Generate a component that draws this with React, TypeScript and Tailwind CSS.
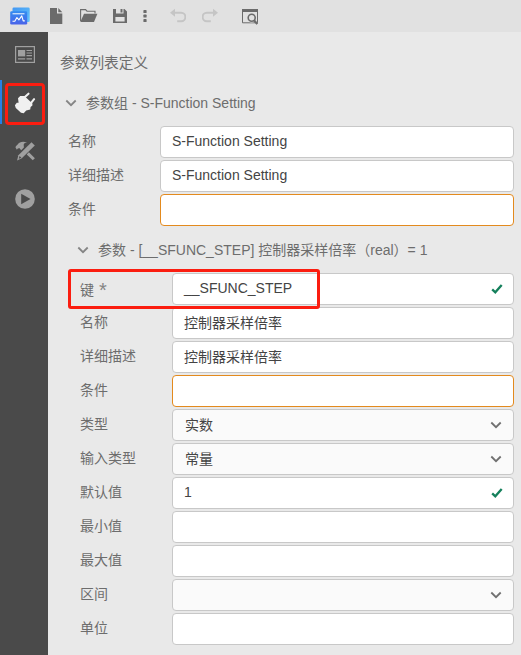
import type { ReactNode } from "react";

function Glyph({ box, w, h, className, children }: { box: string; w: number; h: number; className: string; children: ReactNode }) {
  return (
    <svg viewBox={box} width={w} height={h} className={`shrink-0 ${className}`} fill="none">
      {children}
    </svg>
  );
}

function Toolbar() {
  return (
    <header className="flex h-8 shrink-0 items-center bg-[#e1e1e1] text-[#6b6b6b]">
      <Glyph box="8 4 24 24" w={24} h={24} className="ml-2">
        <defs>
          <linearGradient id="back" x1="0" y1="0" x2="1" y2="1">
            <stop offset="0" stopColor="#4397f3" />
            <stop offset="1" stopColor="#63c5fb" />
          </linearGradient>
          <linearGradient id="front" x1="0" y1="0" x2="0" y2="1">
            <stop offset="0" stopColor="#338cf0" />
            <stop offset="1" stopColor="#4a63e9" />
          </linearGradient>
        </defs>
        <rect x="12.5" y="7.5" width="17.2" height="14.5" rx="1.3" fill="url(#back)" />
        <rect x="10.2" y="11.2" width="17" height="13.3" rx="1.3" fill="url(#front)" />
        <path d="M12.5 13.8h12" stroke="#fff" strokeWidth="1" />
        <path d="M12.5 21.2h2.3l2.1-3.7 2 2.4 2.9-4 1.4 5h1.6" stroke="#fff" strokeWidth="1.1" strokeLinejoin="round" />
      </Glyph>
      <Glyph box="48 8 16 16" w={16} h={16} className="ml-4">
        <path d="M50 8h7v5.5h5.3V24H50zM58.3 8l4 4.2h-4z" fill="currentColor" />
      </Glyph>
      <Glyph box="80 8 18 16" w={18} h={16} className="ml-4">
        <path d="M80.6 21V9.6h5l1.4 1.6h8v2.3" stroke="currentColor" strokeWidth="1.1" />
        <path d="M84 13.8h13.4L94 21.9H80.3z" fill="currentColor" />
      </Glyph>
      <Glyph box="112 8 16 16" w={16} h={16} className="ml-[14px]">
        <path fillRule="evenodd" d="M113 9h11.5l2.5 2.5V23h-14zM116 9v4.6h7.5V9zM115.4 17v4.5h9.2V17z" fill="currentColor" />
        <path d="M120.5 9h2v3.5h-2z" fill="currentColor" />
      </Glyph>
      <Glyph box="143 8 4 16" w={4} h={16} className="ml-[15px]">
        <g fill="currentColor"><rect x="143.4" y="10" width="3.2" height="3.1" rx=".7" /><rect x="143.4" y="14.5" width="3.2" height="3.1" rx=".7" /><rect x="143.4" y="19" width="3.2" height="3.1" rx=".7" /></g>
      </Glyph>
      <Glyph box="170 8 16 16" w={16} h={16} className="ml-[23px] text-[#c5c5c5]">
        <path d="M173 12.8h8.2a4 4 0 0 1 0 8.4h-4" stroke="currentColor" strokeWidth="2" />
        <path d="M170 12.8l5-4v8z" fill="currentColor" />
      </Glyph>
      <Glyph box="202 8 16 16" w={16} h={16} className="ml-4 text-[#c5c5c5]">
        <path d="M215 12.8h-8.2a4 4 0 0 0 0 8.4h4" stroke="currentColor" strokeWidth="2" />
        <path d="M218 12.8l-5-4v8z" fill="currentColor" />
      </Glyph>
      <Glyph box="242 8 16 17" w={16} h={17} className="ml-6">
        <path d="M242.5 9.5h15v13.3h-15z" stroke="currentColor" />
        <path d="M242 9h16v3h-16z" fill="currentColor" />
        <circle cx="251.7" cy="17.8" r="4.8" fill="#e1e1e1" />
        <circle cx="251.7" cy="17.8" r="3.5" stroke="currentColor" strokeWidth="1.6" />
        <path d="M254 20.3l3.3 3.7" stroke="currentColor" strokeWidth="2.2" />
      </Glyph>
    </header>
  );
}

function Sidebar() {
  return (
    <nav className="flex w-12 shrink-0 flex-col bg-[#4a4a4a] text-[#a0a0a0]">
      <div className="flex h-12 items-center justify-center pl-[2px]">
        <Glyph box="0 0 20 17" w={20} h={17} className="-mt-[3px]">
          <rect x=".6" y=".6" width="18.8" height="15.8" stroke="currentColor" strokeWidth="1.2" />
          <path d="M3 4h7.2v6.4H3z" fill="currentColor" />
          <path d="M11.5 4.5H17M11.5 7H17M11.5 9.6H17M3 12.8h7.2M11.5 12.8H17" stroke="currentColor" strokeWidth="1.2" />
        </Glyph>
      </div>
      <div className="relative flex h-12 items-center justify-center text-[#f0f0f0]">
        <div className="absolute left-0 top-0 h-[44px] w-[2px] bg-[#267fe8]" />
        <div className="absolute left-[5px] top-[3px] h-[42px] w-[40px] rounded-[4px] border-[3px] border-[#fb1d10]" />
        <Glyph box="14 92 22 22" w={22} h={22} className="-mt-[2px] ml-[2px]">
          <path d="M18 98.2l2.2-2.2h4.2l8 7.5v2l-1.8 1.4-.4 2.5-4 1.2-2.5 2.6-2.7-.5-5.2-4.6-.9-2.8 1.9-2.5h1.8z" fill="currentColor" />
          <path d="M24.6 97.3l3.9-3.6M30.9 103.2l3.2-4" stroke="currentColor" strokeWidth="2.1" strokeLinecap="round" />
        </Glyph>
      </div>
      <div className="flex h-12 items-center justify-center pl-[2px]">
        <Glyph box="15 141 20 21" w={20} h={21} className="-mt-[2px]">
          <path d="M15.5 147.4c.4-1.8 1.4-1.9 2.2-2.9 1.7-3 5.7-3.2 9.4-2-2.5.2-3.3 1-3.4 2.3l.2 2.8-2.7 2.6-1.9-2.3-1.8.8-.6 1.1z" fill="currentColor" />
          <path d="M27.8 153.4l6 5.9" stroke="currentColor" strokeWidth="3" />
          <path d="M31.5 142.3l3.3 3.2-13 12.8-4.7 2.2 1.3-5.2z" fill="currentColor" />
          <path d="M19.6 156.1l1.8 1.7-2.6 1z" fill="#4a4a4a" />
        </Glyph>
      </div>
      <div className="flex h-12 items-center justify-center pl-[2px]">
        <Glyph box="0 0 20 20" w={20} h={20} className="-mt-[2px]">
          <circle cx="10" cy="10" r="9.8" fill="currentColor" />
          <path d="M6.2 4.8l9.3 5.2-9.3 5.2z" fill="#4a4a4a" />
        </Glyph>
      </div>
    </nav>
  );
}

function Chevron({ className }: { className: string }) {
  return (
    <Glyph box="0 0 12 8" w={12} h={8} className={className}>
      <path d="M1.3 1.5L6 6.2l4.7-4.7" stroke="currentColor" strokeWidth="1.8" />
    </Glyph>
  );
}

type Kind = "text" | "select" | "empty" | "valid";
type RowProps = { label: string; required?: boolean; value?: string; kind?: Kind; labelPad?: string; valuePad?: string };

function Row({ label, required, value, kind = "text", labelPad = "pb-[2px]", valuePad = "pb-[2px]" }: RowProps) {
  const border = kind === "empty" ? "border-[#e38a1e]" : "border-[#c8c8c8]";
  const fill = kind === "select" ? "bg-[#fafafa]" : "bg-white";
  return (
    <div className="flex h-8">
      <div className={`flex w-[92px] shrink-0 items-center leading-5 ${labelPad}`}>
        {label}
        {required && <span className="ml-[5px] text-[20px] leading-5 text-[#858585]">*</span>}
      </div>
      <div className={`flex w-0 grow items-center justify-between rounded-[4px] border pl-[11px] pr-[11px] text-[#444] ${border} ${fill}`}>
        <span className={`whitespace-pre leading-5 ${valuePad}`}>{value}</span>
        {kind === "select" && <Chevron className="text-[#707070]" />}
        {kind === "valid" && (
          <Glyph box="0 0 12 10" w={12} h={10} className="-mr-[1px]">
            <path d="M1.2 5.3l3.1 3 6.4-7.3" stroke="#15805c" strokeWidth="2.3" />
          </Glyph>
        )}
      </div>
    </div>
  );
}

const fields: RowProps[] = [
  { label: "名称", value: "控制器采样倍率", valuePad: "pb-px" },
  { label: "详细描述", value: "控制器采样倍率", valuePad: "pb-px" },
  { label: "条件", kind: "empty" },
  { label: "类型", value: "实数", kind: "select", valuePad: "pb-px pl-px" },
  { label: "输入类型", value: "常量", kind: "select", valuePad: "pb-px pl-px" },
  { label: "默认值", value: "1", kind: "valid" },
  { label: "最小值" },
  { label: "最大值" },
  { label: "区间", kind: "select" },
  { label: "单位" },
];

export default function App() {
  return (
    <div className="flex h-[655px] w-[521px] flex-col overflow-hidden font-['Liberation_Sans','Noto_Sans_CJK_SC',sans-serif] text-sm text-[#6d6d6d]">
      <Toolbar />
      <div className="flex min-h-0 grow">
        <Sidebar />
        <main className="flex w-0 grow flex-col bg-[#e9e9e9] pr-[7px]">
          <h1 className="ml-3 mt-[21px] h-5 text-[14.7px] leading-5">参数列表定义</h1>
          <section className="mt-5">
            <h2 className="flex h-5 items-center whitespace-pre leading-5">
              <Chevron className="ml-[17px] mr-[9px] text-[#858585]" />
              参数组 - S-Function Setting
            </h2>
            <div className="ml-5 mt-[13px] flex flex-col gap-[2px]">
              <Row label="名称" value="S-Function Setting" />
              <Row label="详细描述" value="S-Function Setting" />
              <Row label="条件" kind="empty" />
            </div>
          </section>
          <section className="mt-[14px]">
            <h2 className="flex h-5 items-center whitespace-pre leading-5">
              <Chevron className="ml-[29px] mr-[9px] text-[#858585]" />
              参数 - [__SFUNC_STEP] 控制器采样倍率（real）= 1
            </h2>
            <div className="ml-8 mt-[13px] flex flex-col gap-[2px]">
              <div className="relative">
                <Row label="键" required value="__SFUNC_STEP" kind="valid" labelPad="pt-[2px]" />
                <div className="absolute -left-3 -top-[4px] h-[40px] w-[252px] rounded-[3px] border-[3px] border-[#fb1d10]" />
              </div>
              {fields.map((f) => (
                <Row key={f.label} {...f} />
              ))}
            </div>
          </section>
        </main>
      </div>
    </div>
  );
}
